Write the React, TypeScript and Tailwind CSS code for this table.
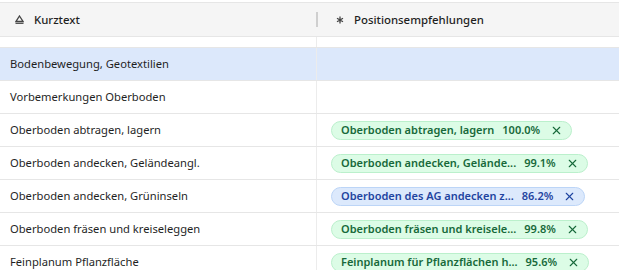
import { X } from "lucide-react";

type Rec = { label: string; pct: string; tone: "green" | "blue" };

const rows: { text: string; rec?: Rec; selected?: boolean }[] = [
  { text: "Bodenbewegung, Geotextilien", selected: true },
  { text: "Vorbemerkungen Oberboden" },
  { text: "Oberboden abtragen, lagern", rec: { label: "Oberboden abtragen, lagern", pct: "100.0%", tone: "green" } },
  { text: "Oberboden andecken, Geländeangl.", rec: { label: "Oberboden andecken, Gelände...", pct: "99.1%", tone: "green" } },
  { text: "Oberboden andecken, Grüninseln", rec: { label: "Oberboden des AG andecken z...", pct: "86.2%", tone: "blue" } },
  { text: "Oberboden fräsen und kreiseleggen", rec: { label: "Oberboden fräsen und kreisele...", pct: "99.8%", tone: "green" } },
  { text: "Feinplanum Pflanzfläche", rec: { label: "Feinplanum für Pflanzflächen h...", pct: "95.6%", tone: "green" } },
];

const Chip = ({ rec }: { rec: Rec }) => (
  <span
    className={
      rec.tone === "green"
        ? "inline-flex h-[19px] items-center rounded-full border border-[#bbf0cc] bg-[#dcfce6] pl-[9px] pr-[8px] text-[11px] font-semibold text-[#17693a]"
        : "inline-flex h-[19px] items-center rounded-full border border-[#bcd5f7] bg-[#dce9fc] pl-[9px] pr-[8px] text-[11px] font-semibold text-[#1f44a0]"
    }
  >
    <span className="whitespace-nowrap">{rec.label}</span>
    <span className="ml-[8px] whitespace-nowrap">{rec.pct}</span>
    <X size={13} strokeWidth={2.1} className="ml-[10px]" />
  </span>
);

const App = () => {
  return (
    <div className="h-[270px] w-[619px] overflow-hidden bg-white text-[11.2px] text-[#1f1f1f]" style={{ fontFamily: '"Noto Sans", "Open Sans", sans-serif' }}>
      <div className="mt-[2px] grid h-[35px] grid-cols-[317px_1fr] border-y border-[#e6e6e6] bg-[#f5f5f5] text-[11.4px] font-medium">
        <div className="relative flex items-center pl-[15px]">
          <svg width="9" height="9" viewBox="0 0 9 9" className="mr-[10px] text-[#444]">
            <path d="M4.5 1 L8 6.5 H1 Z" fill="none" stroke="currentColor" strokeWidth="1.3" />
            <path d="M0.5 8.3 H8.5" stroke="currentColor" strokeWidth="1.2" />
          </svg>
          <span>Kurztext</span>
          <span className="absolute right-[-1px] top-[9px] h-[15px] w-[2px] bg-[#cfcfcf]" />
        </div>
        <div className="flex items-center pl-[19px]">
          <svg width="8" height="8" viewBox="0 0 8 8" className="mr-[10px] text-[#444]">
            <path d="M4 0.5 V7.5 M1 2.2 L7 5.8 M7 2.2 L1 5.8" stroke="currentColor" strokeWidth="1.3" />
          </svg>
          <span>Positionsempfehlungen</span>
        </div>
      </div>
      <div className="grid h-[11px] grid-cols-[317px_1fr] border-b border-[#e6e6e6]">
        <div className="border-r border-[#ececec]" />
        <div />
      </div>
      {rows.map((r) => (
        <div
          key={r.text}
          className={`grid h-[33px] grid-cols-[317px_1fr] border-b border-[#e6e6e6] ${r.selected ? "bg-[#dce8fb]" : ""}`}
        >
          <div className="flex items-center border-r border-[#ececec] pl-[10px]">{r.text}</div>
          <div className="flex items-center pl-[14px]">{r.rec && <Chip rec={r.rec} />}</div>
        </div>
      ))}
    </div>
  );
};

export default App;
